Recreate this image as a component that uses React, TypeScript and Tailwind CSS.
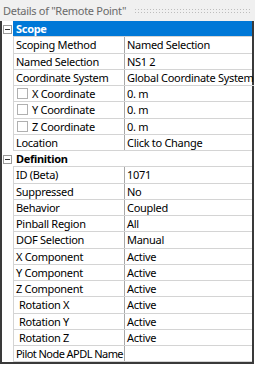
import React from "react";

type Row =
  | { kind: "header"; label: string; selected?: boolean }
  | { kind: "row"; label: string; value: string; check?: boolean; indent?: boolean; tight?: boolean };

const rows: Row[] = [
  { kind: "header", label: "Scope", selected: true },
  { kind: "row", label: "Scoping Method", value: "Named Selection" },
  { kind: "row", label: "Named Selection", value: "NS1 2" },
  { kind: "row", label: "Coordinate System", value: "Global Coordinate System" },
  { kind: "row", label: "X Coordinate", value: "0. m", check: true },
  { kind: "row", label: "Y Coordinate", value: "0. m", check: true },
  { kind: "row", label: "Z Coordinate", value: "0. m", check: true },
  { kind: "row", label: "Location", value: "Click to Change" },
  { kind: "header", label: "Definition" },
  { kind: "row", label: "ID (Beta)", value: "1071" },
  { kind: "row", label: "Suppressed", value: "No" },
  { kind: "row", label: "Behavior", value: "Coupled" },
  { kind: "row", label: "Pinball Region", value: "All" },
  { kind: "row", label: "DOF Selection", value: "Manual" },
  { kind: "row", label: "X Component", value: "Active" },
  { kind: "row", label: "Y Component", value: "Active" },
  { kind: "row", label: "Z Component", value: "Active" },
  { kind: "row", label: "Rotation X", value: "Active", indent: true },
  { kind: "row", label: "Rotation Y", value: "Active", indent: true },
  { kind: "row", label: "Rotation Z", value: "Active", indent: true },
  { kind: "row", label: "Pilot Node APDL Name", value: "", tight: true },
];

function Minus() {
  return (
    <div className="w-[9px] h-[9px] border border-[#9a9a9a] bg-white flex items-center justify-center">
      <div className="w-[5px] h-px bg-[#333]" />
    </div>
  );
}

export default function App() {
  return (
    <div
      className="w-[255px] h-[366px] bg-white text-black text-[11px] leading-none overflow-hidden tracking-[-0.3px]"
      style={{ fontFamily: '"Noto Sans", "Open Sans", sans-serif' }}
    >
      <div className="h-[21px] bg-[#f0f0f0] flex items-center pl-[3px] pr-[3px]">
        <span className="text-[#6a6a6a] whitespace-nowrap">Details of "Remote Point"</span>
        <div className="flex-1 ml-[8px] h-[5px] bg-[radial-gradient(#bdbdbd_0.6px,transparent_0.7px)] bg-[length:3px_3px]" />
      </div>
      <div className="w-[254px] border-l-2 border-r-2 border-b-2 border-[#3a3a3a]">
        {rows.map((r, i) =>
          r.kind === "header" ? (
            <div key={i} className="flex h-[16.25px]">
              <div className="w-[11px] flex items-center justify-center shrink-0">
                <Minus />
              </div>
              <div
                className={
                  "flex-1 flex items-center pl-[3px] font-bold border-b border-[#d4d4d4] " +
                  (r.selected ? "bg-[#0078d7] text-white border-[#0078d7]" : "bg-white")
                }
              >
                {r.label}
              </div>
            </div>
          ) : (
            <div key={i} className="flex h-[16.25px]">
              <div className="w-[11px] shrink-0" />
              <div className="flex-1 flex border-l border-b border-[#d4d4d4]">
                <div className="w-[111px] shrink-0 flex items-center border-r border-[#a8a8a8] whitespace-nowrap overflow-hidden">
                  {r.check ? (
                    <>
                      <div className="ml-[3px] w-[11px] h-[11px] border border-[#b0b0b0] bg-white shrink-0" />
                      <span className="ml-[4px]">{r.label}</span>
                    </>
                  ) : (
                    <span
                      className={
                        (r.indent ? "ml-[5px]" : "ml-[2px]") + (r.tight ? " tracking-[-0.55px]" : "")
                      }
                    >
                      {r.label}
                    </span>
                  )}
                </div>
                <div className="flex-1 flex items-center pl-[2px] whitespace-nowrap overflow-hidden">
                  {r.value}
                </div>
              </div>
            </div>
          )
        )}
      </div>
    </div>
  );
}
